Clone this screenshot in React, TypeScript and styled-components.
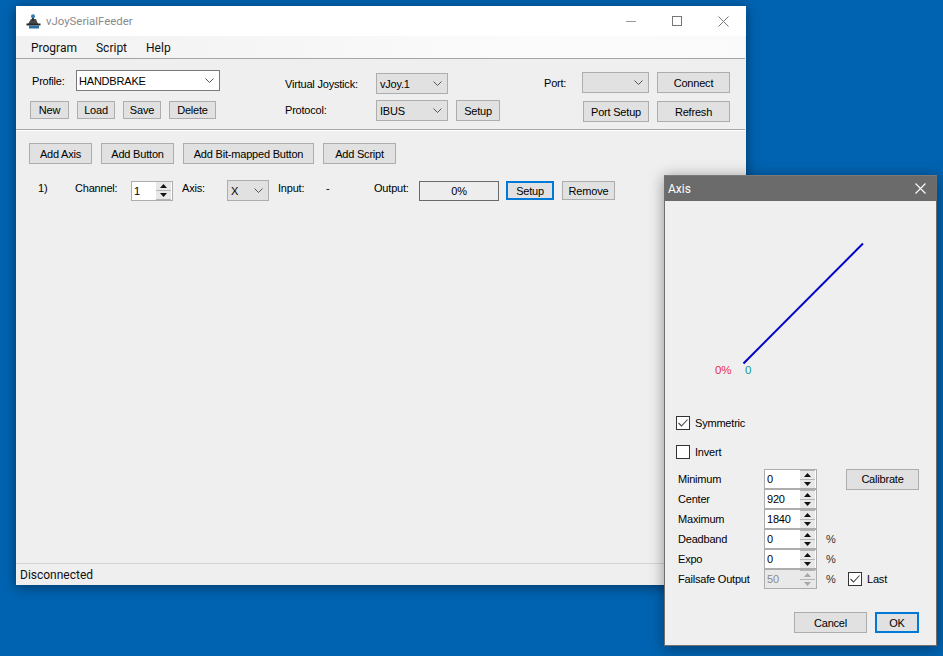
import styled, { createGlobalStyle } from 'styled-components';

const GlobalStyle = createGlobalStyle`
  html, body {
    margin: 0;
    height: 100%;
    overflow: hidden;
    background: #0063b1;
    font-family: 'Liberation Sans', Arial, sans-serif;
    font-size: 11px;
    letter-spacing: -0.2px;
    color: #000;
  }
`;

const Desktop = styled.div`
  position: relative;
  width: 943px;
  height: 656px;
  overflow: hidden;
  background: #0063b1;
`;

/* ---- windows ---- */
const MainWindow = styled.div`
  position: absolute;
  left: 16px;
  top: 6px;
  width: 730px;
  height: 579px;
  display: flex;
  flex-direction: column;
  background: #efefef;
  box-shadow: 0 2px 12px rgba(0, 0, 0, 0.45);
`;

const TitleBar = styled.div`
  height: 30px;
  flex: none;
  display: flex;
  align-items: center;
  background: #fff;
  padding-left: 10px;
  color: #8a8a8a;
  font-family: 'Roboto', sans-serif;
  font-size: 11.4px;
  letter-spacing: 0;
`;

const TitleText = styled.span`
  margin-left: 5px;
`;

const WindowControls = styled.div`
  margin-left: auto;
  display: flex;
  align-items: center;
`;

const ControlIcon = styled.div`
  width: 46px;
  height: 30px;
  display: flex;
  align-items: center;
  justify-content: center;
`;

const MenuBar = styled.div`
  box-sizing: border-box;
  height: 23px;
  flex: none;
  display: flex;
  align-items: center;
  gap: 19px;
  padding: 1px 0 0 15px;
  font-family: 'Roboto', sans-serif;
  font-size: 12px;
  letter-spacing: 0;
  color: #111;
  background: linear-gradient(90deg, #f1f1f1, #fbfbfb 70%, #fafafa);
  border-bottom: 1px solid #a5a5a5;
  margin-right: 1px;
`;

const Toolbar = styled.div`
  height: 70px;
  flex: none;
  display: grid;
  grid-template-columns: 269px 259px 1fr;
  border-bottom: 1px solid #a5a5a5;
  box-shadow: 0 1px 0 #fff;
  margin-right: 1px;
`;

const ToolGroup = styled.div<{ $pl: number }>`
  display: flex;
  flex-direction: column;
  padding-left: ${(p) => p.$pl}px;
`;

const ToolRow = styled.div<{ $gap?: number; $pt?: number }>`
  display: flex;
  align-items: center;
  gap: ${(p) => p.$gap ?? 8}px;
  padding-top: ${(p) => p.$pt ?? 0}px;
`;

const Label = styled.span<{ $w?: number; $pl?: number; $ml?: number; $lift?: number }>`
  box-sizing: border-box;
  display: inline-block;
  width: ${(p) => (p.$w ? `${p.$w}px` : 'auto')};
  padding-left: ${(p) => p.$pl ?? 0}px;
  margin-left: ${(p) => p.$ml ?? 0}px;
  margin-bottom: ${(p) => p.$lift ?? 0}px;
  flex: none;
  color: #000;
  white-space: nowrap;
`;

const Btn = styled.div<{ $w: number; $h?: number; $focus?: boolean; $ml?: number }>`
  box-sizing: border-box;
  width: ${(p) => p.$w}px;
  height: ${(p) => p.$h ?? 21}px;
  margin-left: ${(p) => p.$ml ?? 0}px;
  flex: none;
  display: flex;
  align-items: center;
  justify-content: center;
  background: #e1e1e1;
  border: ${(p) => (p.$focus ? '2px solid #0078d7' : '1px solid #adadad')};
  color: #000;
  white-space: nowrap;
`;

const Combo = styled.div<{ $w: number; $white?: boolean }>`
  box-sizing: border-box;
  width: ${(p) => p.$w}px;
  height: 21px;
  flex: none;
  display: flex;
  align-items: center;
  padding-left: ${(p) => (p.$white ? 2 : 3)}px;
  padding-right: 5px;
  background: ${(p) => (p.$white ? '#fff' : '#e1e1e1')};
  border: 1px solid ${(p) => (p.$white ? '#7a7a7a' : '#adadad')};
  color: #000;
  svg {
    margin-left: auto;
  }
`;

const Chevron = () => (
  <svg width="9" height="5" viewBox="0 0 9 5">
    <path d="M0.5 0.5 L4.5 4.5 L8.5 0.5" fill="none" stroke="#555" strokeWidth="1" />
  </svg>
);

/* ---- axes list ---- */
const Content = styled.div`
  flex: 1;
  padding: 13px 0 0 13px;
`;

const AddRow = styled.div`
  display: flex;
  gap: 9px;
`;

const AxisRow = styled.div`
  display: flex;
  align-items: center;
  margin-top: 16px;
  height: 21px;
`;

const Slot = styled.div<{ $w: number; $pl?: number }>`
  box-sizing: border-box;
  width: ${(p) => p.$w}px;
  padding-left: ${(p) => p.$pl ?? 0}px;
  flex: none;
  padding-bottom: 5px;
  white-space: nowrap;
`;

const Progress = styled.div`
  box-sizing: border-box;
  width: 80px;
  height: 20px;
  flex: none;
  display: flex;
  align-items: center;
  justify-content: center;
  border: 1px solid #6a6a6a;
  background: #ededed;
`;

const StatusBar = styled.div`
  height: 21px;
  flex: none;
  display: flex;
  align-items: center;
  padding-left: 4px;
  border-top: 1px solid #d4d4d4;
  color: #111;
  font-family: 'Roboto', sans-serif;
  font-size: 12px;
  letter-spacing: 0;
`;

/* ---- spin box ---- */
const Spin = styled.div<{ $w: number; $off?: boolean }>`
  box-sizing: border-box;
  width: ${(p) => p.$w}px;
  height: 20px;
  flex: none;
  display: flex;
  align-items: center;
  border: 1px solid #adadad;
  background: ${(p) => (p.$off ? '#e9e9e9' : '#fff')};
  color: ${(p) => (p.$off ? '#8a8a8a' : '#000')};
  padding-left: 2px;
`;

const SpinArrows = styled.div`
  margin-left: auto;
  width: 15px;
  height: 18px;
  margin-right: 1px;
  display: flex;
  flex-direction: column;
  justify-content: center;
  gap: 1px;
  background: #b4b4b4;
  svg {
    display: block;
    margin: 0 auto;
  }
`;

const SpinCell = styled.div`
  height: 8px;
  display: flex;
  align-items: center;
  background: #e8e8e8;
`;

const SpinButtons = ({ off }: { off?: boolean }) => {
  const c = off ? '#a8a8a8' : '#111';
  return (
    <SpinArrows>
      <SpinCell>
        <svg width="7" height="4" viewBox="0 0 7 4">
          <path d="M3.5 0 L7 4 L0 4 Z" fill={c} />
        </svg>
      </SpinCell>
      <SpinCell>
        <svg width="7" height="4" viewBox="0 0 7 4">
          <path d="M0 0 L7 0 L3.5 4 Z" fill={c} />
        </svg>
      </SpinCell>
    </SpinArrows>
  );
};

/* ---- axis dialog ---- */
const Dialog = styled.div`
  position: absolute;
  left: 664px;
  top: 175px;
  width: 273px;
  height: 471px;
  box-sizing: border-box;
  display: flex;
  flex-direction: column;
  background: #efefef;
  border: 1px solid #6f6f6f;
  border-top-color: #7a7a7a;
  box-shadow: 0 2px 14px rgba(0, 0, 0, 0.4);
`;

const DialogTitle = styled.div`
  height: 25px;
  flex: none;
  display: flex;
  align-items: center;
  justify-content: space-between;
  padding: 0 10px 0 3px;
  background: #6b6b6b;
  color: #fff;
  font-family: 'Roboto', sans-serif;
  font-size: 12px;
  letter-spacing: 0;
`;

const Chart = styled.svg`
  display: block;
  flex: none;
`;

const ChartLabel = styled.text`
  font-family: 'Liberation Sans', Arial, sans-serif;
  font-size: 11.5px;
`;

const DialogBody = styled.div`
  flex: 1;
  display: flex;
  flex-direction: column;
  padding-left: 11px;
`;

const CheckRow = styled.div<{ $mb: number }>`
  display: flex;
  align-items: center;
  gap: 5px;
  margin-bottom: ${(p) => p.$mb}px;
`;

const Box = styled.div`
  box-sizing: border-box;
  width: 14px;
  height: 14px;
  flex: none;
  display: flex;
  align-items: center;
  justify-content: center;
  background: #fff;
  border: 1px solid #333;
`;

const FormRow = styled.div`
  display: flex;
  align-items: center;
  height: 20px;
`;

const Unit = styled.span`
  margin-left: 9px;
  width: 22px;
  color: #333;
  flex: none;
`;

const DialogFooter = styled.div`
  display: flex;
  justify-content: flex-end;
  gap: 8px;
  padding: 23px 17px 0 0;
`;

const Check = ({ on }: { on?: boolean }) => (
  <Box>
    {on && (
      <svg width="10" height="8" viewBox="0 0 10 8">
        <path d="M0.5 4 L3.5 7 L9.5 0.5" fill="none" stroke="#444" strokeWidth="1.1" />
      </svg>
    )}
  </Box>
);

const AppIcon = () => (
  <svg width="15" height="15" viewBox="0 0 15 15">
    <path d="M2 10 L5 5 L10 5 L12 10 Z" fill="#4a4a4a" />
    <rect x="0.5" y="9.5" width="14" height="2" fill="#2b2b2b" />
    <rect x="3" y="11.5" width="10" height="3" fill="#2f6f9f" />
    <rect x="6" y="2" width="2" height="5" fill="#333" />
    <circle cx="7" cy="2.2" r="2" fill="#2f7fb5" />
  </svg>
);

const fields: { label: string; value: string; unit?: boolean }[] = [
  { label: 'Minimum', value: '0' },
  { label: 'Center', value: '920' },
  { label: 'Maximum', value: '1840' },
  { label: 'Deadband', value: '0', unit: true },
  { label: 'Expo', value: '0', unit: true },
];

const App = () => {
  return (
    <Desktop>
      <GlobalStyle />
      <MainWindow>
        <TitleBar>
          <AppIcon />
          <TitleText>vJoySerialFeeder</TitleText>
          <WindowControls>
            <ControlIcon>
              <svg width="10" height="10" viewBox="0 0 10 10">
                <path d="M0 5.5 H10" stroke="#999" />
              </svg>
            </ControlIcon>
            <ControlIcon>
              <svg width="10" height="10" viewBox="0 0 10 10">
                <rect x="0.5" y="0.5" width="9" height="9" fill="none" stroke="#777" />
              </svg>
            </ControlIcon>
            <ControlIcon>
              <svg width="11" height="11" viewBox="0 0 11 11">
                <path d="M0.5 0.5 L10.5 10.5 M10.5 0.5 L0.5 10.5" stroke="#777" />
              </svg>
            </ControlIcon>
          </WindowControls>
        </TitleBar>
        <MenuBar>
          <span>Program</span>
          <span>Script</span>
          <span>Help</span>
        </MenuBar>
        <Toolbar>
          <ToolGroup $pl={14}>
            <ToolRow $gap={0} $pt={11}>
              <Label $w={46} $pl={2}>Profile:</Label>
              <Combo $w={144} $white>
                HANDBRAKE
                <Chevron />
              </Combo>
            </ToolRow>
            <ToolRow $pt={10}>
              <Btn $w={39} $h={18}>New</Btn>
              <Btn $w={38} $h={18}>Load</Btn>
              <Btn $w={38} $h={18}>Save</Btn>
              <Btn $w={47} $h={18}>Delete</Btn>
            </ToolRow>
          </ToolGroup>
          <ToolGroup $pl={0}>
            <ToolRow $gap={0} $pt={14}>
              <Label $w={91}>Virtual Joystick:</Label>
              <Combo $w={72}>
                vJoy.1
                <Chevron />
              </Combo>
            </ToolRow>
            <ToolRow $gap={0} $pt={6}>
              <Label $w={91} $lift={2}>Protocol:</Label>
              <Combo $w={72}>
                IBUS
                <Chevron />
              </Combo>
              <Btn $w={44} $ml={8}>Setup</Btn>
            </ToolRow>
          </ToolGroup>
          <ToolGroup $pl={0}>
            <ToolRow $gap={8} $pt={13}>
              <Label $w={30}>Port:</Label>
              <Combo $w={67}>
                <Chevron />
              </Combo>
              <Btn $w={73}>Connect</Btn>
            </ToolRow>
            <ToolRow $gap={8} $pt={8}>
              <Label $w={31} />
              <Btn $w={66}>Port Setup</Btn>
              <Btn $w={73}>Refresh</Btn>
            </ToolRow>
          </ToolGroup>
        </Toolbar>
        <Content>
          <AddRow>
            <Btn $w={63}>Add Axis</Btn>
            <Btn $w={73}>Add Button</Btn>
            <Btn $w={131}>Add Bit-mapped Button</Btn>
            <Btn $w={73}>Add Script</Btn>
          </AddRow>
          <AxisRow>
            <Slot $w={9} />
            <Slot $w={37}>1)</Slot>
            <Slot $w={56}>Channel:</Slot>
            <Spin $w={42}>
              1
              <SpinButtons />
            </Spin>
            <Slot $w={54} $pl={9}>Axis:</Slot>
            <Combo $w={42}>
              X
              <Chevron />
            </Combo>
            <Slot $w={57} $pl={9}>Input:</Slot>
            <Slot $w={48}>-</Slot>
            <Slot $w={45}>Output:</Slot>
            <Progress>0%</Progress>
            <Btn $w={48} $h={19} $focus $ml={7}>Setup</Btn>
            <Btn $w={53} $h={19} $ml={8}>Remove</Btn>
          </AxisRow>
        </Content>
        <StatusBar>Disconnected</StatusBar>
      </MainWindow>

      <Dialog>
        <DialogTitle>
          <span>Axis</span>
          <svg width="11" height="11" viewBox="0 0 11 11">
            <path d="M0.5 0.5 L10.5 10.5 M10.5 0.5 L0.5 10.5" stroke="#fff" strokeWidth="1.1" />
          </svg>
        </DialogTitle>
        <Chart width="271" height="215" viewBox="0 0 271 215">
          <path d="M78.5 162.5 L198 42.5" stroke="#0000c8" strokeWidth="2" fill="none" />
          <ChartLabel x="50" y="173" fill="#e8304a">0%</ChartLabel>
          <ChartLabel x="80" y="173" fill="#109a90">0</ChartLabel>
        </Chart>
        <DialogBody>
          <CheckRow $mb={15}>
            <Check on />
            <span>Symmetric</span>
          </CheckRow>
          <CheckRow $mb={10}>
            <Check />
            <span>Invert</span>
          </CheckRow>
          {fields.map((f, i) => (
            <FormRow key={f.label}>
              <Label $w={88} $pl={2}>{f.label}</Label>
              <Spin $w={53}>
                {f.value}
                <SpinButtons />
              </Spin>
              {f.unit && <Unit>%</Unit>}
              {i === 0 && <Btn $w={73} $ml={29}>Calibrate</Btn>}
            </FormRow>
          ))}
          <FormRow>
            <Label $w={88} $pl={2}>Failsafe Output</Label>
            <Spin $w={53} $off>
              50
              <SpinButtons off />
            </Spin>
            <Unit>%</Unit>
            <Check on />
            <Label $ml={5}>Last</Label>
          </FormRow>
          <DialogFooter>
            <Btn $w={73}>Cancel</Btn>
            <Btn $w={44} $focus>OK</Btn>
          </DialogFooter>
        </DialogBody>
      </Dialog>
    </Desktop>
  );
};

export default App;
